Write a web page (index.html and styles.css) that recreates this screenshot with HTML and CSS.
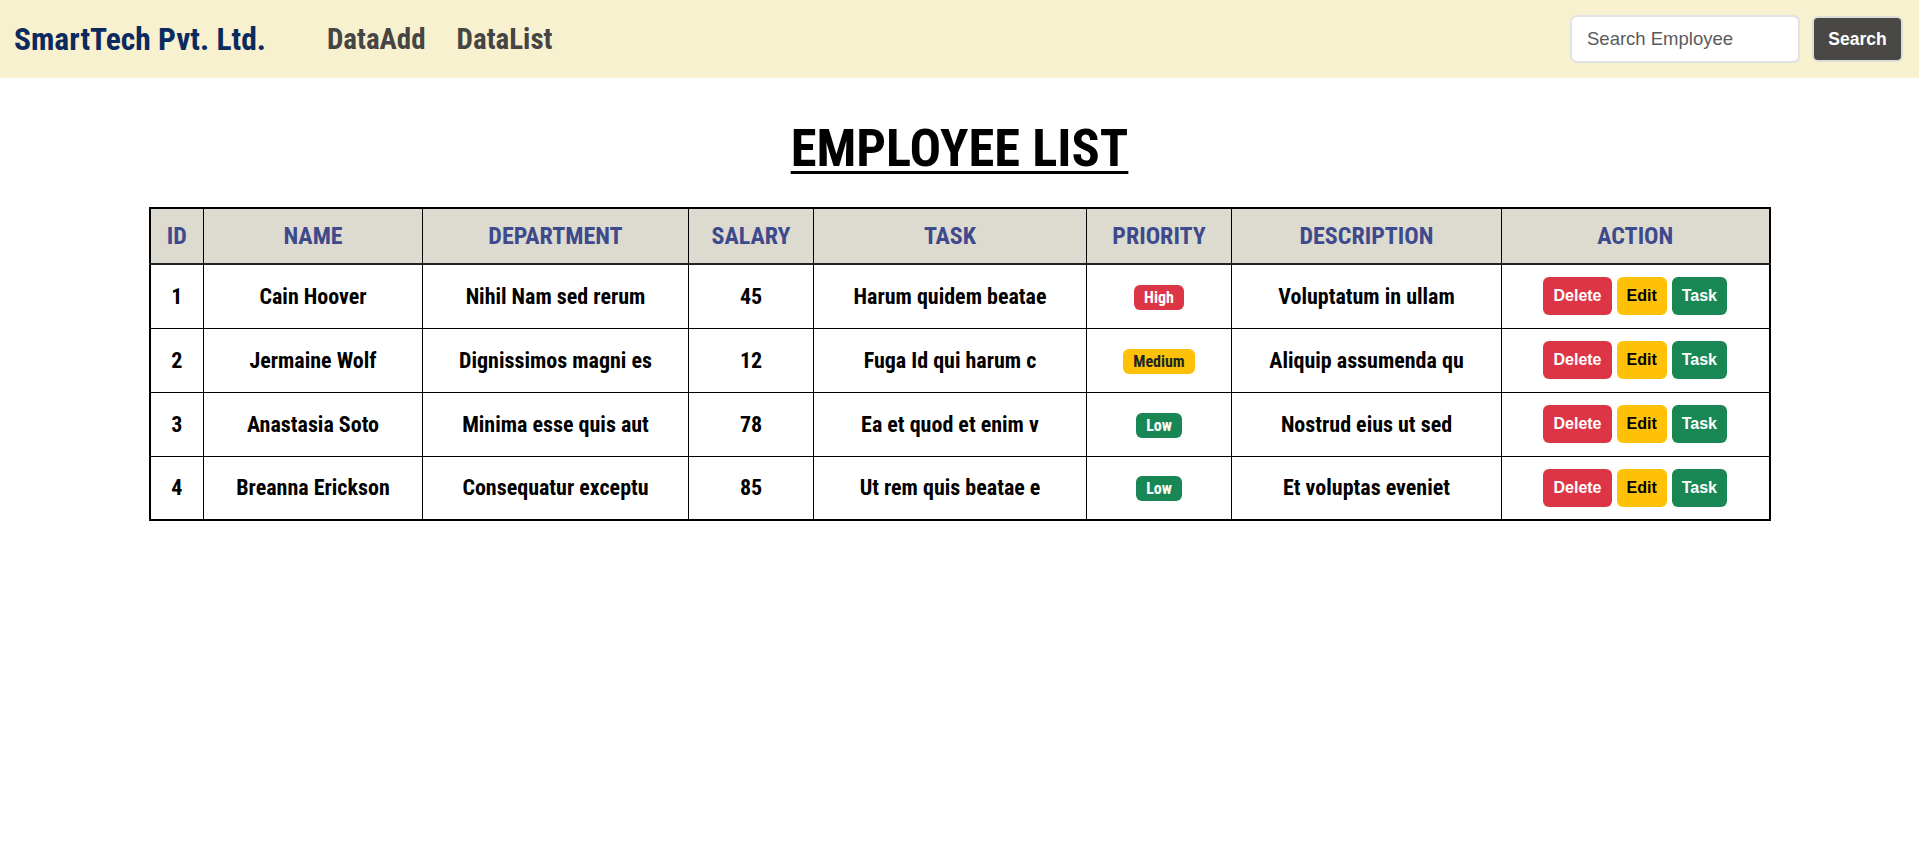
FILE: index.html
```html
<!DOCTYPE html>
<html lang="en">
<head>
<meta charset="utf-8">
<title>Employee List</title>
<link rel="stylesheet" href="styles.css">
</head>
<body>
<nav class="navbar">
  <a class="brand" href="#">SmartTech Pvt. Ltd.</a>
  <ul class="nav-links">
    <li><a href="#">DataAdd</a></li>
    <li><a href="#">DataList</a></li>
  </ul>
  <form class="search">
    <input class="search-input" type="text" placeholder="Search Employee">
    <button class="search-btn" type="button">Search</button>
  </form>
</nav>
<main class="content">
  <h1 class="title">EMPLOYEE LIST</h1>
  <table class="emp-table">
    <colgroup>
      <col class="c-id"><col class="c-name"><col class="c-dept"><col class="c-sal"><col class="c-task"><col class="c-pri"><col class="c-desc"><col class="c-act">
    </colgroup>
    <thead>
      <tr><th>ID</th><th>NAME</th><th>DEPARTMENT</th><th>SALARY</th><th>TASK</th><th>PRIORITY</th><th>DESCRIPTION</th><th>ACTION</th></tr>
    </thead>
    <tbody>
      <tr>
        <td>1</td><td>Cain Hoover</td><td>Nihil Nam sed rerum</td><td>45</td><td>Harum quidem beatae</td>
        <td><span class="badge badge-high">High</span></td>
        <td>Voluptatum in ullam</td>
        <td><div class="actions"><button class="btn btn-delete">Delete</button><button class="btn btn-edit">Edit</button><button class="btn btn-task">Task</button></div></td>
      </tr>
      <tr>
        <td>2</td><td>Jermaine Wolf</td><td>Dignissimos magni es</td><td>12</td><td>Fuga Id qui harum c</td>
        <td><span class="badge badge-medium">Medium</span></td>
        <td>Aliquip assumenda qu</td>
        <td><div class="actions"><button class="btn btn-delete">Delete</button><button class="btn btn-edit">Edit</button><button class="btn btn-task">Task</button></div></td>
      </tr>
      <tr>
        <td>3</td><td>Anastasia Soto</td><td>Minima esse quis aut</td><td>78</td><td>Ea et quod et enim v</td>
        <td><span class="badge badge-low">Low</span></td>
        <td>Nostrud eius ut sed</td>
        <td><div class="actions"><button class="btn btn-delete">Delete</button><button class="btn btn-edit">Edit</button><button class="btn btn-task">Task</button></div></td>
      </tr>
      <tr>
        <td>4</td><td>Breanna Erickson</td><td>Consequatur exceptu</td><td>85</td><td>Ut rem quis beatae e</td>
        <td><span class="badge badge-low">Low</span></td>
        <td>Et voluptas eveniet</td>
        <td><div class="actions"><button class="btn btn-delete">Delete</button><button class="btn btn-edit">Edit</button><button class="btn btn-task">Task</button></div></td>
      </tr>
    </tbody>
  </table>
</main>
</body>
</html>
```

FILE: styles.css
```css
* { box-sizing: border-box; }

body {
  margin: 0;
  background: #ffffff;
  font-family: "Roboto Condensed", "Liberation Sans Narrow", "DejaVu Sans Condensed", sans-serif;
  color: #000;
}

.navbar {
  height: 78px;
  background: #f8f1cf;
  display: flex;
  align-items: center;
  padding: 0 16px 0 14px;
}

.brand {
  font-size: 31.5px;
  font-weight: bold;
  color: #0b2a5e;
  text-decoration: none;
}

.nav-links {
  list-style: none;
  display: flex;
  gap: 31px;
  margin: 0 0 0 61px;
  padding: 0;
}

.nav-links a {
  font-size: 29px;
  font-weight: bold;
  color: #464543;
  text-decoration: none;
}

.search {
  margin-left: auto;
  display: flex;
  align-items: center;
  gap: 12px;
}

.search-input {
  width: 230px;
  height: 48px;
  border: 2px solid #e1e2e3;
  border-radius: 7px;
  background: #fff;
  padding: 0 15px;
  font-family: "Liberation Sans", Arial, sans-serif;
  font-size: 18.5px;
  color: #555;
  outline: none;
}

.search-input::placeholder { color: #5a5a5a; }

.search-btn {
  width: 91px;
  height: 46px;
  border: 2px solid #dcdcd8;
  border-radius: 6px;
  background: #4a4845;
  color: #fff;
  font-family: "Liberation Sans", Arial, sans-serif;
  font-weight: bold;
  font-size: 17.5px;
  padding: 0;
}

.content {
  padding: 0;
}

.title {
  margin: 41px 0 30px;
  text-align: center;
  font-size: 52.5px;
  line-height: 58px;
  font-weight: bold;
  text-decoration: underline;
  text-decoration-thickness: 3px;
  text-underline-offset: 5px;
}

.emp-table {
  width: 1620px;
  margin: 0 auto;
  border-collapse: collapse;
  table-layout: fixed;
  border: 2px solid #000;
}

.c-id { width: 54px; }
.c-name { width: 219px; }
.c-dept { width: 266px; }
.c-sal { width: 125px; }
.c-task { width: 273px; }
.c-pri { width: 145px; }
.c-desc { width: 270px; }
.c-act { width: 268px; }

.emp-table th,
.emp-table td {
  border: 1px solid #000;
  text-align: center;
  vertical-align: middle;
  padding: 0 4px;
  font-weight: bold;
}

.emp-table thead tr {
  height: 56px;
}

.emp-table th {
  background: #dddbd0;
  color: #3e4a8b;
  font-size: 24px;
  border-bottom: 2px solid #222;
}

.emp-table tbody tr {
  height: 64px;
}

.emp-table td {
  font-size: 22px;
}

.badge {
  display: inline-block;
  font-size: 16px;
  line-height: 17px;
  font-weight: bold;
  padding: 4px 10px;
  border-radius: 6px;
  color: #fff;
}

.badge-high { background: #dc3545; }
.badge-medium { background: #ffc107; color: #212529; }
.badge-low { background: #198754; }

.actions {
  display: flex;
  justify-content: center;
  gap: 5px;
}

.btn {
  height: 38px;
  border: 1px solid transparent;
  border-radius: 6px;
  padding: 0 9px;
  font-family: "Liberation Sans", Arial, sans-serif;
  font-weight: bold;
  font-size: 16px;
  color: #fff;
}

.btn-delete { background: #dc3545; }
.btn-edit { background: #ffc107; color: #000; }
.btn-task { background: #198754; }
```
